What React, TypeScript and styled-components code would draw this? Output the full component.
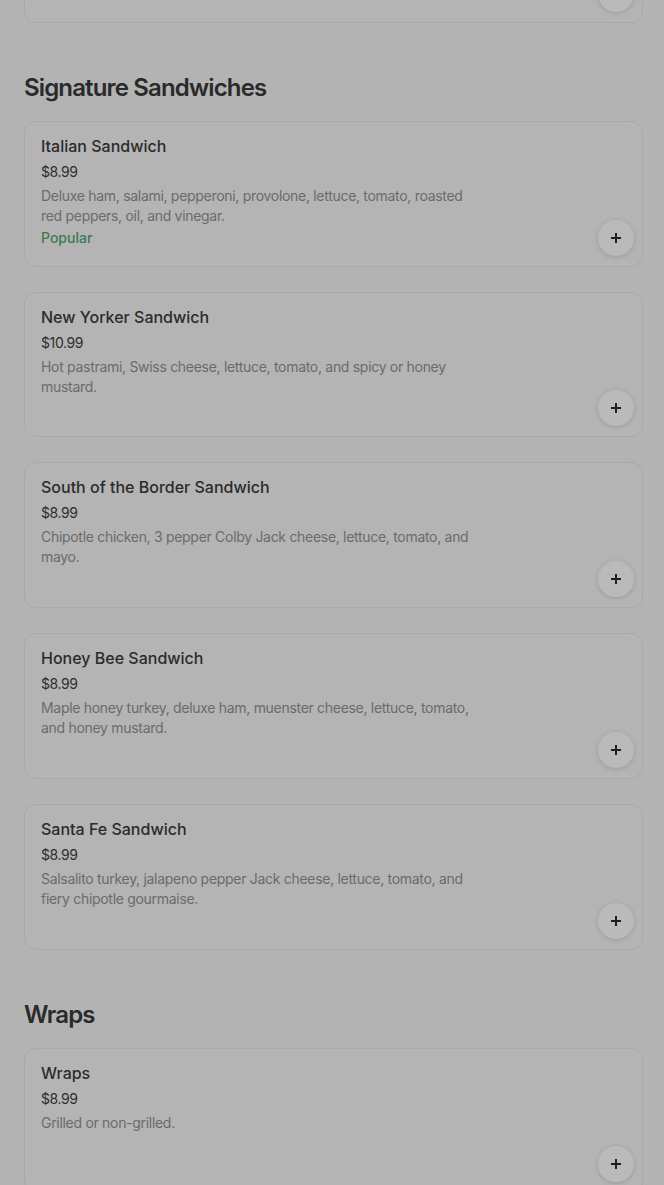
import React from 'react';
import styled, { createGlobalStyle } from 'styled-components';

type MenuItem = {
    name: string;
    price: string;
    description?: string;
    badge?: string;
};

type MenuSection = {
    title: string;
    items: MenuItem[];
};

const sections: MenuSection[] = [
    {
        title: 'Signature Sandwiches',
        items: [
            {
                name: 'Italian Sandwich',
                price: '$8.99',
                description: 'Deluxe ham, salami, pepperoni, provolone, lettuce, tomato, roasted red peppers, oil, and vinegar.',
                badge: 'Popular',
            },
            {
                name: 'New Yorker Sandwich',
                price: '$10.99',
                description: 'Hot pastrami, Swiss cheese, lettuce, tomato, and spicy or honey mustard.',
            },
            {
                name: 'South of the Border Sandwich',
                price: '$8.99',
                description: 'Chipotle chicken, 3 pepper Colby Jack cheese, lettuce, tomato, and mayo.',
            },
            {
                name: 'Honey Bee Sandwich',
                price: '$8.99',
                description: 'Maple honey turkey, deluxe ham, muenster cheese, lettuce, tomato, and honey mustard.',
            },
            {
                name: 'Santa Fe Sandwich',
                price: '$8.99',
                description: 'Salsalito turkey, jalapeno pepper Jack cheese, lettuce, tomato, and fiery chipotle gourmaise.',
            },
        ],
    },
    {
        title: 'Wraps',
        items: [{ name: 'Wraps', price: '$8.99', description: 'Grilled or non-grilled.' }],
    },
];

// last card of the previous section, scrolled mostly out of view
const previousItem: MenuItem = {
    name: 'Club Sandwich',
    price: '$9.99',
    description: 'Turkey, ham, bacon, Swiss cheese, lettuce, and tomato.',
};

const GlobalStyle = createGlobalStyle`
    html, body {
        margin: 0;
        padding: 0;
        background: #b3b3b3;
        font-family: Inter, 'Noto Sans', 'Liberation Sans', sans-serif;
        color: #2b2b2b;
        -webkit-font-smoothing: antialiased;
    }
    * { box-sizing: border-box; }
`;

const Page = styled.div`
    height: 1185px;
    overflow: hidden;
`;

const Scroller = styled.div`
    padding: 0 21px 0 24px;
    margin-top: -123px;
`;

const Section = styled.section`
    padding-top: 49px;
`;

const SectionTitle = styled.h2`
    margin: 0 0 17px;
    font-size: 24px;
    line-height: 32px;
    font-weight: 600;
    letter-spacing: -0.85px;
    color: #2a2a2a;
`;

const List = styled.div`
    display: flex;
    flex-direction: column;
    gap: 25px;
`;

const Card = styled.div`
    display: grid;
    grid-template-columns: 1fr 40px;
    min-height: 145.75px;
    border: 1px solid #a9a9a9;
    border-radius: 12px;
    background: #b4b4b4;
    padding: 13px 8px 10px 16px;
`;

const Info = styled.div`
    display: flex;
    flex-direction: column;
    max-width: 440px;
`;

const Name = styled.div`
    font-size: 16px;
    line-height: 22px;
    font-weight: 500;
    color: #2b2b2b;
`;

const Price = styled.div`
    margin-top: 5px;
    font-size: 14px;
    line-height: 20px;
    color: #2e2e2e;
    letter-spacing: -0.4px;
`;

const Description = styled.div`
    margin-top: 4px;
    font-size: 14px;
    line-height: 20px;
    color: #6b6b6b;
    letter-spacing: -0.3px;
`;

const Badge = styled.div`
    margin-top: 2px;
    font-size: 14px;
    line-height: 20px;
    font-weight: 500;
    color: #3d7a55;
`;

const AddButton = styled.button`
    align-self: end;
    justify-self: end;
    width: 36px;
    height: 36px;
    border-radius: 50%;
    border: none;
    padding: 0;
    background: #bababa;
    box-shadow: 0 1px 5px rgba(0, 0, 0, 0.14);
    display: flex;
    align-items: center;
    justify-content: center;
    color: #1f1f1f;
    cursor: pointer;
`;

function PlusIcon() {
    return (
        <svg width='12' height='12' viewBox='0 0 12 12' fill='none'>
            <path d='M6 1v10M1 6h10' stroke='currentColor' strokeWidth='2' />
        </svg>
    );
}

function ItemCard({ item }: { item: MenuItem }) {
    return (
        <Card>
            <Info>
                <Name>{item.name}</Name>
                <Price>{item.price}</Price>
                {item.description && <Description>{item.description}</Description>}
                {item.badge && <Badge>{item.badge}</Badge>}
            </Info>
            <AddButton aria-label={`Add ${item.name}`}>
                <PlusIcon />
            </AddButton>
        </Card>
    );
}

export default function App() {
    return (
        <>
            <GlobalStyle />
            <Page>
                <Scroller>
                    <List>
                        <ItemCard item={previousItem} />
                    </List>
                    {sections.map((section) => (
                        <Section key={section.title}>
                            <SectionTitle>{section.title}</SectionTitle>
                            <List>
                                {section.items.map((item) => (
                                    <ItemCard key={item.name} item={item} />
                                ))}
                            </List>
                        </Section>
                    ))}
                </Scroller>
            </Page>
        </>
    );
}
